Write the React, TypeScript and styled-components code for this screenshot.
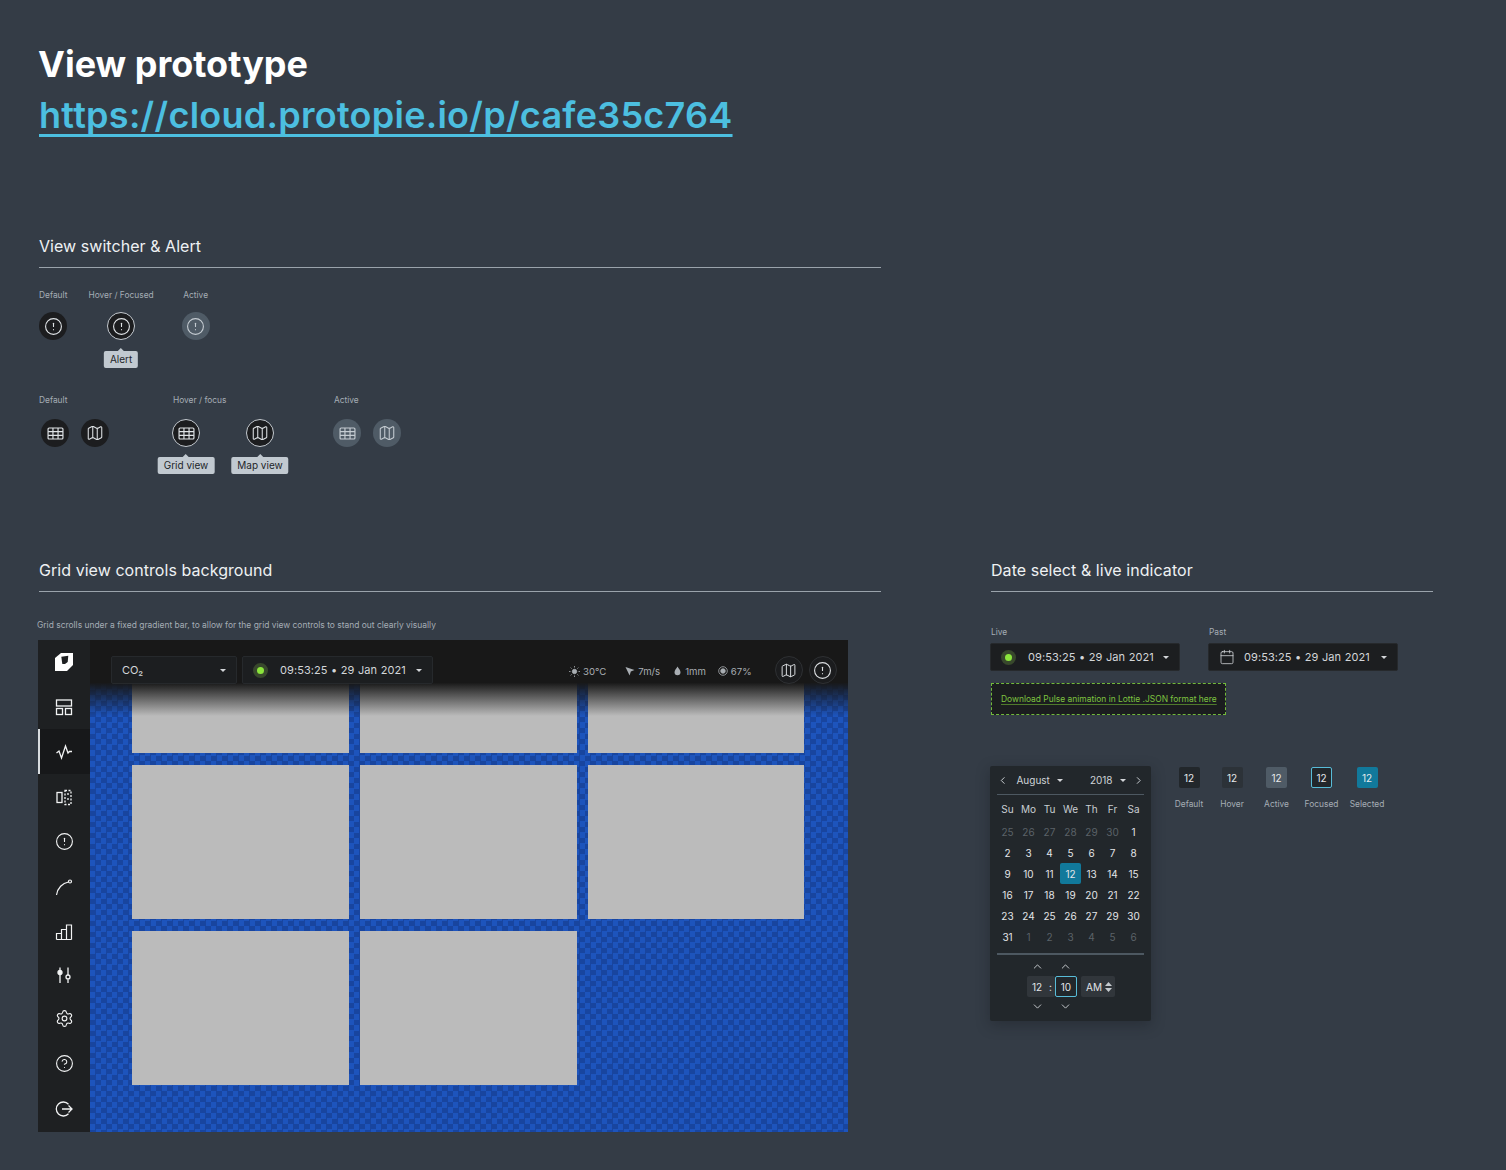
import * as React from 'react'
import styled, { createGlobalStyle } from 'styled-components'
import { Calendar, ChevronDown, ChevronLeft, ChevronRight, ChevronUp, CircleAlert, CircleHelp, Map as MapIcon, Settings } from 'lucide-react'

const GlobalStyle = createGlobalStyle`
    html, body {
        margin: 0;
        padding: 0;
        background: #343c46;
    }
    body {
        font-family: Inter, "Liberation Sans", sans-serif;
        color: #fff;
    }
`

const S = {
    Page: styled.div`
        width: 1506px;
        height: 1170px;
        box-sizing: border-box;
        padding: 39px 0 0 39px;
        overflow: hidden;
    `,
    Title: styled.h1`
        margin: 0 0 0 -1px;
        font-size: 36px;
        line-height: 51px;
        font-weight: 700;
        color: #fff;
    `,
    PrototypeLink: styled.a`
        display: inline-block;
        margin-top: 5px;
        font-size: 36px;
        line-height: 40px;
        font-weight: 600;
        color: #4cbfe0;
        text-decoration: underline;
        text-decoration-thickness: 3px;
        text-decoration-skip-ink: none;
        text-underline-offset: 6px;
        letter-spacing: 0.26px;
    `,
    Section: styled.section<{ $width: number }>`
        width: ${p => p.$width}px;
    `,
    SectionHeading: styled.h2`
        margin: 0;
        height: 31px;
        font-size: 16px;
        line-height: 20px;
        font-weight: 400;
        letter-spacing: 0.05px;
        color: #eef1f3;
        border-bottom: 1px solid #9aa3ab;
    `,
    SwitcherSection: styled.div`
        margin-top: 101px;
    `,
    Caption: styled.div`
        font-size: 8.4px;
        line-height: 11px;
        color: #a5adb5;
        white-space: nowrap;
    `,
    AlertRow: styled.div`
        display: flex;
        align-items: flex-start;
        margin-top: 22px;
    `,
    AlertColumn: styled.div<{ $gap: number }>`
        display: flex;
        flex-direction: column;
        align-items: center;
        gap: 11px;
        margin-right: ${p => p.$gap}px;
    `,
    ViewRow: styled.div`
        display: flex;
        align-items: flex-start;
        margin-top: 55px;
    `,
    ViewGroup: styled.div<{ $width: number; $inset: number }>`
        width: ${p => p.$width}px;
        display: flex;
        flex-direction: column;
        gap: 13px;
        > div:last-child {
            margin-left: ${p => p.$inset}px;
        }
    `,
    ButtonPair: styled.div<{ $gap: number }>`
        display: flex;
        gap: ${p => p.$gap}px;
    `,
    RoundButton: styled.button<{ $state?: 'default' | 'hover' | 'active' }>`
        position: relative;
        width: 28px;
        height: 28px;
        box-sizing: border-box;
        padding: 0;
        border-radius: 50%;
        display: flex;
        align-items: center;
        justify-content: center;
        color: ${p => (p.$state === 'active' ? '#c5ccd2' : '#dfe3e6')};
        background: ${p => (p.$state === 'active' ? '#4f5b66' : '#1c1d1f')};
        border: ${p => (p.$state === 'hover' ? '1px solid #c4cad0' : 'none')};
    `,
    Tooltip: styled.span<{ $top: number }>`
        position: absolute;
        top: ${p => p.$top}px;
        left: 50%;
        transform: translateX(-50%);
        padding: 0 6px;
        height: 17px;
        line-height: 17px;
        border-radius: 2px;
        background: #c1c9d0;
        color: #22262a;
        font-size: 10px;
        font-family: Inter, sans-serif;
        white-space: nowrap;
        &::before {
            content: '';
            position: absolute;
            top: -3px;
            left: 50%;
            margin-left: -3px;
            border-left: 3px solid transparent;
            border-right: 3px solid transparent;
            border-bottom: 3px solid #c1c9d0;
        }
    `,
    Columns: styled.div`
        display: flex;
        gap: 110px;
        margin-top: 113px;
    `,
    GridCaption: styled.div`
        font-size: 8.45px;
        line-height: 11px;
        color: #a5adb5;
        white-space: nowrap;
        margin: 28px 0 9px -2px;
    `,
    Canvas: styled.div`
        margin-left: -1px;
        width: 810px;
        height: 492px;
        display: flex;
        overflow: hidden;
    `,
    SideNav: styled.nav`
        width: 52px;
        flex: none;
        background: #1e2022;
        display: flex;
        flex-direction: column;
    `,
    NavItem: styled.div<{ $active?: boolean; $height?: number }>`
        height: ${p => p.$height ?? 45}px;
        flex: none;
        display: flex;
        align-items: center;
        justify-content: center;
        color: #f2f3f4;
        background: ${p => (p.$active ? '#17181a' : 'transparent')};
        box-shadow: ${p => (p.$active ? 'inset 2px 0 0 #d8dcdf' : 'none')};
    `,
    Stage: styled.div`
        position: relative;
        flex: 1;
        background-color: #1d54bc;
        background-image: conic-gradient(#18459f 25%, transparent 0 50%, #18459f 0 75%, transparent 0);
        background-size: 11px 11px;
    `,
    CardGrid: styled.div`
        display: grid;
        grid-template-columns: 217px 217px 216px;
        grid-template-rows: 113px 154px 154px;
        column-gap: 11px;
        row-gap: 12px;
        padding-left: 42px;
    `,
    Card: styled.div`
        background: #bbbbbb;
    `,
    Fade: styled.div`
        position: absolute;
        inset: 0 0 auto 0;
        height: 76px;
        background: linear-gradient(#181818 0, #181818 56%, rgba(24, 24, 24, 0));
    `,
    TopControls: styled.div`
        position: absolute;
        top: 16px;
        left: 21px;
        right: 11px;
        display: flex;
        align-items: center;
    `,
    Select: styled.div<{ $width: number; $gap?: number }>`
        width: ${p => p.$width}px;
        height: 28px;
        box-sizing: border-box;
        display: flex;
        align-items: center;
        padding: 0 10px 0 10px;
        margin-right: ${p => p.$gap ?? 0}px;
        background: #1c1e20;
        border: 1px solid #26292c;
        border-radius: 2px;
        font-size: 11px;
        letter-spacing: 0.08px;
        word-spacing: 0.3px;
        color: #d3d6d9;
        flex: none;
    `,
    SelectText: styled.span`
        flex: 1;
        white-space: nowrap;
    `,
    Caret: styled.i`
        flex: none;
        width: 0;
        height: 0;
        border-left: 3.5px solid transparent;
        border-right: 3.5px solid transparent;
        border-top: 3.5px solid #d3d6d9;
    `,
    Pulse: styled.span`
        flex: none;
        width: 15px;
        height: 15px;
        margin-right: 12px;
        border-radius: 50%;
        background: #38482c;
        display: flex;
        align-items: center;
        justify-content: center;
        &::after {
            content: '';
            width: 7px;
            height: 7px;
            border-radius: 50%;
            background: #8be53c;
        }
    `,
    Weather: styled.div`
        display: flex;
        align-items: center;
        margin: 2px 0 0 136px;
        font-size: 9.6px;
        color: #a9aeb3;
        white-space: nowrap;
    `,
    WeatherItem: styled.span<{ $gap: number }>`
        display: flex;
        align-items: center;
        gap: 3px;
        margin-right: ${p => p.$gap}px;
    `,
    TopButtons: styled.div`
        display: flex;
        gap: 6px;
        margin: 0 0 0 23px;
    `,
    TopButton: styled.div`
        width: 28px;
        height: 28px;
        box-sizing: border-box;
        border-radius: 50%;
        border: 1px solid #2e3033;
        background: #1b1c1e;
        color: #dcdfe2;
        display: flex;
        align-items: center;
        justify-content: center;
    `,
    DateFields: styled.div`
        display: flex;
        gap: 28px;
        margin: 35px 0 0 -1px;
    `,
    FieldColumn: styled.div`
        display: flex;
        flex-direction: column;
        gap: 5px;
        > div:first-child {
            margin-left: 1px;
        }
    `,
    CalendarGlyph: styled.span`
        display: flex;
        margin-right: 9px;
        color: #d3d6d9;
    `,
    DownloadBox: styled.div`
        width: 235px;
        height: 32px;
        box-sizing: border-box;
        margin-top: 12px;
        padding-left: 9px;
        display: flex;
        align-items: center;
        background: #1b1d1f;
        border: 1px dashed #71b93b;
    `,
    DownloadLink: styled.a`
        font-size: 8.45px;
        line-height: 12px;
        color: #7ec23f;
        text-decoration: underline;
        text-decoration-color: #4f7a2c;
        text-underline-offset: 2px;
        white-space: nowrap;
    `,
    PickerRow: styled.div`
        display: flex;
        align-items: flex-start;
        margin: 51px 0 0 -1px;
    `,
    Picker: styled.div`
        width: 161px;
        height: 255px;
        flex: none;
        box-sizing: border-box;
        padding: 0 7px;
        background: #22272b;
        border-radius: 2px;
        box-shadow: 0 4px 14px rgba(20, 24, 30, 0.35);
        display: flex;
        flex-direction: column;
        font-size: 10px;
        color: #e2e5e8;
    `,
    PickerHead: styled.div`
        height: 28px;
        display: flex;
        align-items: center;
        border-bottom: 1px solid #4d5861;
        color: #cfd4d8;
    `,
    HeadLabel: styled.span<{ $left: number; $right: number }>`
        display: flex;
        align-items: center;
        gap: 7px;
        margin: 0 ${p => p.$right}px 0 ${p => p.$left}px;
    `,
    Days: styled.div`
        display: grid;
        grid-template-columns: repeat(7, 21px);
        grid-template-rows: 23px;
        grid-auto-rows: 21px;
        margin: 3px 0 6px 0;
    `,
    Day: styled.div<{ $muted?: boolean; $selected?: boolean; $head?: boolean }>`
        display: flex;
        align-items: ${p => (p.$head ? 'flex-start' : 'center')};
        padding-top: ${p => (p.$head ? 5 : 0)}px;
        justify-content: center;
        border-radius: 2px;
        color: ${p => (p.$muted ? '#5b6268' : p.$head ? '#c9ced2' : '#e2e5e8')};
        background: ${p => (p.$selected ? '#11799b' : 'transparent')};
    `,
    PickerRule: styled.div`
        height: 2px;
        background: #4d5861;
    `,
    TimeArea: styled.div`
        display: flex;
        flex-direction: column;
        padding: 5px 0 0 30px;
    `,
    ArrowRow: styled.div`
        display: flex;
        gap: 15px;
        padding-left: 4px;
        color: #c5cace;
    `,
    TimeRow: styled.div`
        display: flex;
        align-items: center;
        height: 21px;
        margin: 3px 0;
    `,
    TimeCell: styled.div<{ $focused?: boolean; $wide?: boolean }>`
        box-sizing: border-box;
        height: 21px;
        width: ${p => (p.$wide ? 34 : p.$focused ? 22 : 28)}px;
        display: flex;
        align-items: center;
        justify-content: ${p => (p.$wide ? 'flex-start' : p.$focused ? 'center' : 'space-between')};
        gap: 3px;
        padding: ${p => (p.$wide ? '0 0 0 5px' : p.$focused ? '0' : '0 3px 0 5px')};
        margin-left: ${p => (p.$wide ? 4 : 0)}px;
        background: ${p => (p.$focused ? '#22272b' : '#31363b')};
        border: ${p => (p.$focused ? '1px solid #58bcd8' : 'none')};
        border-radius: 2px;
    `,
    DayStates: styled.div`
        display: flex;
        margin: 1px 0 0 17px;
    `,
    DayState: styled.div<{ $width: number }>`
        width: ${p => p.$width}px;
        display: flex;
        flex-direction: column;
        align-items: center;
        gap: 11px;
        font-size: 8.4px;
        color: #a5adb5;
    `,
    StateChip: styled.div<{ $kind: 'default' | 'hover' | 'active' | 'focused' | 'selected' }>`
        width: 21px;
        height: 21px;
        box-sizing: border-box;
        display: flex;
        align-items: center;
        justify-content: center;
        border-radius: 2px;
        font-size: 10px;
        color: #e6e9eb;
        background: ${p =>
            ({ default: '#22272b', hover: '#2c3238', active: '#4f5b66', focused: '#22272b', selected: '#11799b' })[p.$kind]};
        border: ${p => (p.$kind === 'focused' ? '1px solid #58bcd8' : 'none')};
    `,
}

const GridIcon = () => (
    <svg width="17" height="17" viewBox="0 0 16 16" fill="none" stroke="currentColor" strokeWidth="1.1">
        <rect x="1" y="2.8" width="14" height="10.4" rx="1" />
        <path d="M1 6.2h14M1 9.7h14M5.6 2.8v10.4M10.4 2.8v10.4" />
    </svg>
)

const FoldedMap = ({ size = 18 }: { size?: number }) => (
    <MapIcon size={size} strokeWidth={1.4} />
)

const AlertGlyph = () => <CircleAlert size={19} strokeWidth={1.4} />

const LogoMark = () => (
    <svg width="18" height="18" viewBox="0 0 18 18">
        <path d="M0 5 6 0h12v12l-6 6H0z" fill="#fff" />
        <path d="M6.3 3.7 13.3 2.7 12.7 9 10 11H7.3z" fill="#1e2022" />
    </svg>
)

const LayoutIcon = () => (
    <svg width="18" height="18" viewBox="0 0 18 18" fill="none" stroke="currentColor" strokeWidth="1.3">
        <rect x="1.5" y="2" width="15" height="6" />
        <rect x="1.5" y="10.5" width="6" height="6" />
        <rect x="10.5" y="10.5" width="6" height="6" />
    </svg>
)

const PulseIcon = () => (
    <svg width="18" height="18" viewBox="0 0 18 18" fill="none" stroke="currentColor" strokeWidth="1.3">
        <path d="M1.5 10 4 8l2.5 7L10.5 3l2.5 7 1.5-1.5H17" />
    </svg>
)

const CompareIcon = () => (
    <svg width="18" height="18" viewBox="0 0 18 18" fill="none" stroke="currentColor" strokeWidth="1.3">
        <rect x="2" y="4.5" width="5" height="10" />
        <path d="M10 2.5h6v14h-6z" strokeDasharray="2 1.5" />
        <path d="M13 5v2M13 10v2" />
    </svg>
)

const CurveIcon = () => (
    <svg width="18" height="18" viewBox="0 0 18 18" fill="none" stroke="currentColor" strokeWidth="1.2">
        <path d="M1.5 17C2.5 10 7.5 5 13.5 4" />
        <circle cx="15" cy="3.5" r="1.5" />
    </svg>
)

const BarsIcon = () => (
    <svg width="18" height="18" viewBox="0 0 18 18" fill="none" stroke="currentColor" strokeWidth="1.2">
        <path d="M1.5 16.5h15M1.5 16.5v-6h5v6M6.5 16.5V6.500h5v10M11.5 16.5V2h5v14.5" />
    </svg>
)

const SlidersIcon = () => (
    <svg width="18" height="18" viewBox="0 0 18 18" fill="none" stroke="currentColor" strokeWidth="1.3">
        <path d="M5 1.5v3M5 9v8M13 1.5V9M13 13.5V17" />
        <circle cx="5" cy="6.5" r="2" fill="currentColor" />
        <circle cx="13" cy="11" r="2" />
    </svg>
)

const ExitIcon = () => (
    <svg width="18" height="18" viewBox="0 0 18 18" fill="none" stroke="currentColor" strokeWidth="1.3">
        <path d="M13.5 4.3A7 7 0 1 0 13.5 13.7" />
        <path d="M7 9h10M13.5 5.5 17 9l-3.5 3.5" />
    </svg>
)

const SunIcon = () => (
    <svg width="11" height="11" viewBox="0 0 11 11" fill="currentColor" stroke="currentColor" strokeWidth="0.8">
        <circle cx="5.5" cy="5.5" r="2.2" />
        <path d="M5.5 0v1.5M5.5 9.5V11M0 5.5h1.5M9.5 5.5H11M1.6 1.6l1 1M8.4 8.4l1 1M1.6 9.4l1-1M8.4 2.6l1-1" />
    </svg>
)

const ArrowGlyph = () => (
    <svg width="10" height="10" viewBox="0 0 10 10" fill="currentColor">
        <path d="M.5 1 9.500 4 5.800 5.400 4.600 9.500z" />
    </svg>
)

const DropGlyph = () => (
    <svg width="9" height="10" viewBox="0 0 9 10" fill="currentColor">
        <path d="M4.500.5C3.500 2.500 1.500 4.200 1.500 6.300a3 3 0 0 0 6 0C7.500 4.200 5.500 2.500 4.500.5z" />
    </svg>
)

const TargetGlyph = () => (
    <svg width="10" height="10" viewBox="0 0 10 10" fill="none" stroke="currentColor" strokeWidth="0.8">
        <circle cx="5" cy="5" r="4.3" />
        <circle cx="5" cy="5" r="2.3" fill="currentColor" />
    </svg>
)

const UpDown = () => (
    <svg width="7" height="10" viewBox="0 0 7 10" fill="#c5cace">
        <path d="M3.5 0 7 4H0zM3.5 10 0 6h7z" />
    </svg>
)

const weekdays = ['Su', 'Mo', 'Tu', 'We', 'Th', 'Fr', 'Sa']
const leading = [25, 26, 27, 28, 29, 30]
const monthDays = [1, 2, 3, 4, 5, 6, 7, 8, 9, 10, 11, 12, 13, 14, 15, 16, 17, 18, 19, 20, 21, 22, 23, 24, 25, 26, 27, 29, 30, 31]
const trailing = [1, 2, 3, 4, 5, 6]

const dateText = '09:53:25 • 29 Jan 2021'

const DatePicker = () => (
    <S.Picker>
        <S.PickerHead>
            <ChevronLeft size={13} strokeWidth={2} />
            <S.HeadLabel $left={8} $right={27}>
                August <S.Caret />
            </S.HeadLabel>
            <S.HeadLabel $left={0} $right={7}>
                2018 <S.Caret />
            </S.HeadLabel>
            <ChevronRight size={13} strokeWidth={2} />
        </S.PickerHead>
        <S.Days>
            {weekdays.map(d => (
                <S.Day key={d} $head>
                    {d}
                </S.Day>
            ))}
            {leading.map(d => (
                <S.Day key={`l${d}`} $muted>
                    {d}
                </S.Day>
            ))}
            {monthDays.map(d => (
                <S.Day key={d} $selected={d === 12}>
                    {d}
                </S.Day>
            ))}
            {trailing.map(d => (
                <S.Day key={`t${d}`} $muted>
                    {d}
                </S.Day>
            ))}
        </S.Days>
        <S.PickerRule />
        <S.TimeArea>
            <S.ArrowRow>
                <ChevronUp size={13} strokeWidth={1.8} />
                <ChevronUp size={13} strokeWidth={1.8} />
            </S.ArrowRow>
            <S.TimeRow>
                <S.TimeCell>
                    <span>12</span>
                    <span>:</span>
                </S.TimeCell>
                <S.TimeCell $focused>10</S.TimeCell>
                <S.TimeCell $wide>
                    AM <UpDown />
                </S.TimeCell>
            </S.TimeRow>
            <S.ArrowRow>
                <ChevronDown size={13} strokeWidth={1.8} />
                <ChevronDown size={13} strokeWidth={1.8} />
            </S.ArrowRow>
        </S.TimeArea>
    </S.Picker>
)

export default function App() {
    return (
        <S.Page>
            <GlobalStyle />
            <S.Title>View prototype</S.Title>
            <S.PrototypeLink>https://cloud.protopie.io/p/cafe35c764</S.PrototypeLink>

            <S.SwitcherSection>
                <S.Section $width={842}>
                    <S.SectionHeading>View switcher &amp; Alert</S.SectionHeading>
                    <S.AlertRow>
                        <S.AlertColumn $gap={21}>
                            <S.Caption>Default</S.Caption>
                            <S.RoundButton>
                                <AlertGlyph />
                            </S.RoundButton>
                        </S.AlertColumn>
                        <S.AlertColumn $gap={28}>
                            <S.Caption>Hover / Focused</S.Caption>
                            <S.RoundButton $state="hover">
                                <AlertGlyph />
                                <S.Tooltip $top={38}>Alert</S.Tooltip>
                            </S.RoundButton>
                        </S.AlertColumn>
                        <S.AlertColumn $gap={0}>
                            <S.Caption>Active</S.Caption>
                            <S.RoundButton $state="active">
                                <AlertGlyph />
                            </S.RoundButton>
                        </S.AlertColumn>
                    </S.AlertRow>
                    <S.ViewRow>
                        <S.ViewGroup $width={134} $inset={2}>
                            <S.Caption>Default</S.Caption>
                            <S.ButtonPair $gap={12}>
                                <S.RoundButton>
                                    <GridIcon />
                                </S.RoundButton>
                                <S.RoundButton>
                                    <FoldedMap />
                                </S.RoundButton>
                            </S.ButtonPair>
                        </S.ViewGroup>
                        <S.ViewGroup $width={161} $inset={-1}>
                            <S.Caption>Hover / focus</S.Caption>
                            <S.ButtonPair $gap={46}>
                                <S.RoundButton $state="hover">
                                    <GridIcon />
                                    <S.Tooltip $top={37}>Grid view</S.Tooltip>
                                </S.RoundButton>
                                <S.RoundButton $state="hover">
                                    <FoldedMap />
                                    <S.Tooltip $top={37}>Map view</S.Tooltip>
                                </S.RoundButton>
                            </S.ButtonPair>
                        </S.ViewGroup>
                        <S.ViewGroup $width={80} $inset={-1}>
                            <S.Caption>Active</S.Caption>
                            <S.ButtonPair $gap={12}>
                                <S.RoundButton $state="active">
                                    <GridIcon />
                                </S.RoundButton>
                                <S.RoundButton $state="active">
                                    <FoldedMap />
                                </S.RoundButton>
                            </S.ButtonPair>
                        </S.ViewGroup>
                    </S.ViewRow>
                </S.Section>
            </S.SwitcherSection>

            <S.Columns>
                <S.Section $width={842}>
                    <S.SectionHeading>Grid view controls background</S.SectionHeading>
                    <S.GridCaption>Grid scrolls under a fixed gradient bar, to allow for the grid view controls to stand out clearly visually</S.GridCaption>
                    <S.Canvas>
                        <S.SideNav>
                            <S.NavItem $height={44}><LogoMark /></S.NavItem>
                            <S.NavItem><LayoutIcon /></S.NavItem>
                            <S.NavItem $active><PulseIcon /></S.NavItem>
                            <S.NavItem><CompareIcon /></S.NavItem>
                            <S.NavItem><CircleAlert size={19} strokeWidth={1.4} /></S.NavItem>
                            <S.NavItem><CurveIcon /></S.NavItem>
                            <S.NavItem><BarsIcon /></S.NavItem>
                            <S.NavItem $height={42}><SlidersIcon /></S.NavItem>
                            <S.NavItem><Settings size={19} strokeWidth={1.4} /></S.NavItem>
                            <S.NavItem><CircleHelp size={19} strokeWidth={1.4} /></S.NavItem>
                            <S.NavItem><ExitIcon /></S.NavItem>
                        </S.SideNav>
                        <S.Stage>
                            <S.CardGrid>
                                {Array.from({ length: 8 }, (_, i) => (
                                    <S.Card key={i} />
                                ))}
                            </S.CardGrid>
                            <S.Fade />
                            <S.TopControls>
                                <S.Select $width={126} $gap={5}>
                                    <S.SelectText>CO₂</S.SelectText>
                                    <S.Caret />
                                </S.Select>
                                <S.Select $width={191}>
                                    <S.Pulse />
                                    <S.SelectText>{dateText}</S.SelectText>
                                    <S.Caret />
                                </S.Select>
                                <S.Weather>
                                    <S.WeatherItem $gap={19}><SunIcon />30°C</S.WeatherItem>
                                    <S.WeatherItem $gap={13}><ArrowGlyph />7m/s</S.WeatherItem>
                                    <S.WeatherItem $gap={12}><DropGlyph />1mm</S.WeatherItem>
                                    <S.WeatherItem $gap={0}><TargetGlyph />67%</S.WeatherItem>
                                </S.Weather>
                                <S.TopButtons>
                                    <S.TopButton><FoldedMap size={17} /></S.TopButton>
                                    <S.TopButton><CircleAlert size={19} strokeWidth={1.4} /></S.TopButton>
                                </S.TopButtons>
                            </S.TopControls>
                        </S.Stage>
                    </S.Canvas>
                </S.Section>

                <S.Section $width={442}>
                    <S.SectionHeading>Date select &amp; live indicator</S.SectionHeading>
                    <S.DateFields>
                        <S.FieldColumn>
                            <S.Caption>Live</S.Caption>
                            <S.Select $width={190}>
                                <S.Pulse />
                                <S.SelectText>{dateText}</S.SelectText>
                                <S.Caret />
                            </S.Select>
                        </S.FieldColumn>
                        <S.FieldColumn>
                            <S.Caption>Past</S.Caption>
                            <S.Select $width={190}>
                                <S.CalendarGlyph>
                                    <Calendar size={16} strokeWidth={1.2} />
                                </S.CalendarGlyph>
                                <S.SelectText>{dateText}</S.SelectText>
                                <S.Caret />
                            </S.Select>
                        </S.FieldColumn>
                    </S.DateFields>
                    <S.DownloadBox>
                        <S.DownloadLink>Download Pulse animation in Lottie .JSON format here</S.DownloadLink>
                    </S.DownloadBox>
                    <S.PickerRow>
                        <DatePicker />
                        <S.DayStates>
                            <S.DayState $width={42}><S.StateChip $kind="default">12</S.StateChip>Default</S.DayState>
                            <S.DayState $width={44}><S.StateChip $kind="hover">12</S.StateChip>Hover</S.DayState>
                            <S.DayState $width={45}><S.StateChip $kind="active">12</S.StateChip>Active</S.DayState>
                            <S.DayState $width={45}><S.StateChip $kind="focused">12</S.StateChip>Focused</S.DayState>
                            <S.DayState $width={46}><S.StateChip $kind="selected">12</S.StateChip>Selected</S.DayState>
                        </S.DayStates>
                    </S.PickerRow>
                </S.Section>
            </S.Columns>
        </S.Page>
    )
}
